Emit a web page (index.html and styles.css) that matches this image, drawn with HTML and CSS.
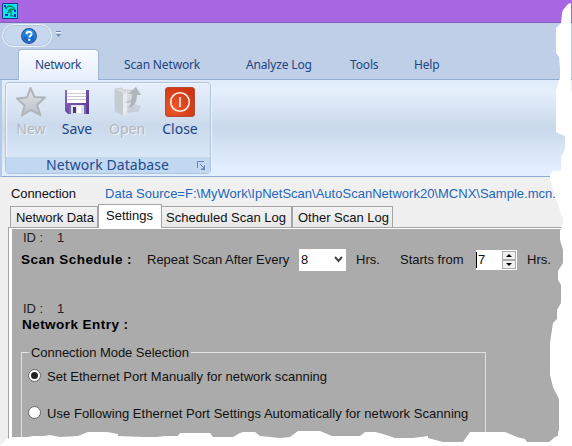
FILE: index.html
```html
<!DOCTYPE html>
<html lang="en">
<head>
<meta charset="utf-8">
<title>Network Scanner</title>
<link rel="stylesheet" href="styles.css">
</head>
<body>
<main class="window">
  <header class="titlebar">
    <svg class="app-icon" width="16" height="16" viewBox="0 0 16 16">
      <path fill="#10e4ee" stroke="#123c88" d="M.5.5h15v15H.5z"/>
      <path fill="none" stroke="#087c54" stroke-width="1.2" d="M4 5l3-2 4 1 2 3-4-1-3 2M9 6v7h4M9 8l-4 2M3 4l2 2"/>
      <path fill="#1630c8" d="M2 2h2v2H2zM3 11h3v2H3zM12 11h2v3h-2zM12 7h2v2h-2z"/>
    </svg>
  </header>
  <section class="ribbon-head">
    <div class="quick">
      <div class="pill">
        <svg width="16" height="16" viewBox="0 0 16 16">
          <defs><radialGradient id="help" cx=".5" cy=".25" r=".8"><stop offset="0" stop-color="#2f9cf0"/><stop offset="1" stop-color="#0647b4"/></radialGradient></defs>
          <circle cx="8" cy="8" r="7.3" fill="url(#help)" stroke="#1d4c96" stroke-width="1.2"/>
          <circle cx="8" cy="8" r="6.3" fill="none" stroke="#64b5f4" stroke-width=".5"/>
          <path d="M5.600 6.200c0-3.200 5-3.100 5-.2 0 1.700-2.300 1.700-2.300 3.500" fill="none" stroke="#fff" stroke-width="1.900"/>
          <path fill="#fff" d="M7.200 10.800h2.100v2H7.200z"/>
        </svg>
      </div>
      <svg class="more" width="7" height="7" viewBox="0 0 7 7"><path fill="#7188ac" d="M1 0h5v1H1zM1 3h5L3.500 6z"/><path fill="#f4f8ff" d="M1 1h5v1H1z"/></svg>
    </div>
    <nav class="tabs">
      <span class="tab active">Network</span>
      <span class="tab t-scan">Scan Network</span>
      <span class="tab t-log">Analyze Log</span>
      <span class="tab t-tools">Tools</span>
      <span class="tab t-help">Help</span>
    </nav>
  </section>
  <section class="ribbon">
    <div class="group">
      <div class="actions">
        <div class="action off">
          <svg width="32" height="32" viewBox="0 0 32 32"><defs><linearGradient id="star" x2="0" y2="1"><stop stop-color="#e4e6e9"/><stop offset="1" stop-color="#b9bec5"/></linearGradient></defs><path fill="url(#star)" stroke="#b0b5bc" stroke-width="2" stroke-linejoin="round" d="M15.500 3l4 9 10.500.500-8 7.500 3.500 10-9.500-5-9 5.500 2.500-10L2 13.500l10-1z"/></svg>
          <span>New</span>
        </div>
        <div class="action save">
          <svg width="32" height="32" viewBox="0 0 32 32"><defs><linearGradient id="disk" x2="1" y2="1"><stop stop-color="#8a6dc4"/><stop offset="1" stop-color="#563190"/></linearGradient></defs><path fill="url(#disk)" d="M4 5h24v24H7l-3-3z"/><path fill="#fff" d="M6 5h19v13H6z"/><path stroke="#cbc8d4" d="M6 8.500h19M6 11.500h19M6 14.500h19"/><path fill="#786db0" d="M8 20h17v9H8z"/><path fill="#dedee8" d="M10 20h13v9H10z"/><path fill="#49366f" d="M12 22h3v6h-3z"/><path fill="#fff" d="M16 21h4v7h-4z"/></svg>
          <span>Save</span>
        </div>
        <div class="action off open">
          <svg width="32" height="32" viewBox="0 0 32 32"><path fill="#d8dce1" stroke="#c9ced5" d="M4 4l7-1 1 2h9v22H4z"/><path fill="#c6cbd2" d="M4 4l8 4v23l-8-5z"/><path fill="#e8ebef" d="M12 10l4-3v20l-4 4z"/><path fill="#bcc2ca" d="M16 27h11l3-6-9-3z" opacity=".55"/><path fill="#b0b5bc" d="M13 17c7 0 9-4 8-8h-4l8-7 5 8h-4c0 8-4 13-10 13 3-2 4-4 4-7-2 2-4 2-7 1z"/></svg>
          <span>Open</span>
        </div>
        <div class="action close">
          <svg width="32" height="32" viewBox="0 0 32 32"><defs><radialGradient id="power" cx=".3" cy=".7" r=".8"><stop stop-color="#f0582d"/><stop offset="1" stop-color="#cc3414"/></radialGradient></defs><rect x="1.500" y="2.500" width="29" height="29" rx="2.500" fill="url(#power)" stroke="#b94a38"/><circle cx="16" cy="17" r="9.300" fill="none" stroke="#fff5ea" stroke-width="1.600"/><path stroke="#fff5ea" stroke-width="1.600" d="M16 12v10"/></svg>
          <span>Close</span>
        </div>
      </div>
      <div class="group-name"><span>Network Database</span>
        <svg width="9" height="9" viewBox="0 0 9 9"><path fill="none" stroke="#6287b8" d="M.5 7V.5H7M3 3l4 4"/><path fill="#6287b8" d="M8 4v5H4v-1l2-1 1-2z"/></svg>
      </div>
    </div>
  </section>
  <div class="connection"><span class="conn-label">Connection</span><span class="source">Data Source=F:\MyWork\IpNetScan\AutoScanNetwork20\MCNX\Sample.mcn.</span></div>
  <nav class="page-tabs">
    <span class="ptab p1">Network Data</span><span class="ptab selected">Settings</span><span class="ptab p3">Scheduled Scan Log</span><span class="ptab p4">Other Scan Log</span>
  </nav>
  <section class="page">
    <div class="content">
      <div class="id"><span>ID :</span><span>1</span></div>
      <div class="schedule">
        <strong class="sched-title">Scan Schedule :</strong>
        <span class="repeat">Repeat Scan After Every</span>
        <div class="combo"><span>8</span><svg width="9" height="7" viewBox="0 0 9 7"><path fill="none" stroke="#484848" stroke-width="2" d="M1 1l3.500 4L8 1"/></svg></div>
        <span>Hrs.</span>
        <span class="starts">Starts from</span>
        <div class="spinner"><span>7</span><div class="buttons"><i class="up"></i><i class="down"></i></div></div>
        <span>Hrs.</span>
      </div>
      <div class="id second"><span>ID :</span><span>1</span></div>
      <strong class="entry">Network Entry :</strong>
      <fieldset class="modes">
        <legend>Connection Mode Selection</legend>
        <div class="mode"><i class="radio on"></i><span class="m1">Set Ethernet Port Manually for network scanning</span></div>
        <div class="mode"><i class="radio"></i><span class="m2">Use Following Ethernet Port Settings Automatically for network Scanning</span></div>
      </fieldset>
    </div>
  </section>
  <svg class="torn" width="572" height="446" viewBox="0 0 572 446">
    <path fill="#fff" d="M571 3L568 4 563 10 562 13 561 23 556 28V53L559 57 560 68V78L558 83 556 91V132L560 134 565 136V149L561 157V171H553L550 174V180L552 185 554 193 556 200 559 207 561 215 563 218V224L560 231V240L563 250V263L558 271V280L561 285V303L557 310V319L553 323 551 336 550 343V375L553 387 559 399V430L558 432V436L555 437 549 442H527L525 439 517 437 505 432H470L463 442H443L428 438V436L413 438H395L383 434 375 432H365L360 436H332L320 431H298L290 437 280 438 260 436 255 432H243L240 433 233 437H213L210 433H180L178 436H165L157 437H143L118 436V434L107 432H88L78 436 60 437 50 435 44 436 33 436 28 437H13L7 439 0 446H572V91H571z"/>
  </svg>
</main>
</body>
</html>
```
FILE: styles.css
```css
* { box-sizing: border-box; }
body { margin: 0; font-family: "Liberation Sans", Arial, sans-serif; font-size: 13px; color: #111; }
svg { display: block; flex: none; }
.window { position: relative; width: 572px; height: 446px; overflow: hidden; background: #f0f0f0; white-space: nowrap; }
.titlebar { height: 23px; padding: 3px 2px; background: #a866e2; border-bottom: 1px solid #8060b8; }
.ribbon-head { height: 57px; background: #becfe7; border-bottom: 1px solid #93accf; }
.quick { display: flex; height: 26px; padding: 1px 2px; }
.pill { display: flex; align-items: center; justify-content: center; width: 50px; height: 23px; padding-left: 3px; border: 1px solid #edf3fb; border-radius: 12px; background: #c7d7ed; box-shadow: inset 0 0 0 1px #b5c7e0; }
.more { margin: 7px 0 0 3px; }
.tabs { display: flex; height: 31px; padding-left: 18px; font: 12px/32px "Noto Sans", sans-serif; letter-spacing: -.15px; color: #214583; }
.tab.active { width: 81px; height: 31px; padding-left: 16px; border: 1px solid #9fb5d5; border-bottom: 0; border-radius: 4px 4px 0 0; background: linear-gradient(#f8faff, #e7effb); box-shadow: inset 1px 1px #fff; line-height: 30px; letter-spacing: -.3px; }
.t-scan { width: 122px; padding-left: 25px; }
.t-log { width: 104px; padding-left: 25px; }
.t-tools { width: 64px; padding-left: 25px; }
.t-help { padding-left: 25px; }
.ribbon { height: 97px; padding: 2px 4px; border-left: 2px solid #b5cae5; border-bottom: 1px solid #8daed3; background: linear-gradient(#dfebfa 0, #e5effc 12%, #d9e5f4 28%, #c9d9eb 50%, #d7e5f5 72%, #e2effe 94%); }
.group { width: 206px; height: 92px; margin-left: -1px; border: 1px solid #afc3dd; border-radius: 4px; background: linear-gradient(#e6effa 0, #dae6f4 25%, #cad9eb 48%, #d3e2f3 70%, #e0edfb); box-shadow: inset 1px 1px #f3f7fd, 1px 0 #edf4fd; overflow: hidden; }
.actions { display: flex; height: 74px; padding: 2px 0 0 9px; color: #1b448b; font: 14px/17px "Noto Sans", sans-serif; }
.action { display: flex; flex-direction: column; align-items: center; width: 32px; }
.action span { margin-top: 3px; }
.save { margin-left: 14px; }
.open { margin-left: 18px; }
.close { margin-left: 21px; }
.off { color: #b2b8c0; text-shadow: 1px 1px #edf2f8; }
.group-name { display: flex; height: 16px; align-items: center; padding-left: 40px; background: #c2d8f1; color: #214b8e; font: 14px/16px "Noto Sans", sans-serif; letter-spacing: .06px; }
.group-name span { width: 151px; }
.connection { display: flex; height: 27px; padding: 9px 11px 0; line-height: 16px; }
.conn-label { width: 94px; letter-spacing: -.1px; }
.source { color: #2266bd; letter-spacing: .01px; }
.page-tabs { display: flex; align-items: flex-end; height: 23px; padding-left: 10px; }
.ptab { height: 21px; padding-left: 5px; border: 1px solid #a5a5a5; border-bottom: 0; background: linear-gradient(#f2f2f2, #e8e8e8); line-height: 21px; }
.p1 { width: 88px; letter-spacing: -.08px; }
.ptab.selected { position: relative; width: 64px; height: 24px; margin-bottom: -1px; padding-left: 7px; background: #fff; line-height: 21px; }
.p3 { width: 130px; padding-left: 4px; border-left: 0; }
.p4 { width: 101px; }
.page { height: 219px; margin-left: 8px; padding: 1px 0 0 3px; border-left: 1px solid #a5a5a5; border-top: 1px solid #a5a5a5; background: #fff; }
.content { height: 217px; padding-left: 9px; background: #ababab; }
.id { display: flex; height: 15px; padding-left: 2px; line-height: 17px; color: #222; }
.id span:first-child { width: 34px; }
.schedule { display: grid; grid-template-columns: 126px 152px 57px 44px 76px 51px 1fr; align-items: center; height: 31px; }
.sched-title, .entry { color: #000; font-size: 13.500px; letter-spacing: .45px; }
.combo { display: flex; align-items: center; justify-content: space-between; width: 47px; height: 22px; padding: 0 3px 0 2px; background: #fff; }
.spinner { display: flex; width: 41px; height: 20px; background: #fff; }
.spinner span { width: 26px; margin: 2px 0; padding-left: 1px; border-left: 1px solid #000; line-height: 16px; }
.buttons { width: 15px; padding: 1px 0; }
.buttons i { display: flex; align-items: center; justify-content: center; width: 14px; height: 9px; border: 1px solid #aaa; background: #f0f0f0; }
.buttons i::after { content: ""; border: 3px solid transparent; }
.up::after { border-top-width: 0 !important; border-bottom-color: #000 !important; }
.down::after { border-bottom-width: 0 !important; border-top-color: #000 !important; }
.second { height: 16px; margin-top: 25px; }
.entry { display: block; height: 20px; margin-left: 1px; line-height: 17px; }
.modes { width: 465px; height: 115px; margin: 8px 0 0; padding: 6px 6px 0; border: 1px solid #e2e2e2; }
.modes legend { height: 16px; margin-left: 1px; padding: 0 2px; line-height: 18px; letter-spacing: -.04px; }
.mode { display: flex; align-items: center; height: 37px; padding-bottom: 18px; }
.m1 { letter-spacing: .025px; }
.m2 { letter-spacing: .042px; }
.m1, .m2 { padding-top: 1px; }
.radio { display: flex; align-items: center; justify-content: center; width: 13px; height: 13px; margin-right: 6px; border: 1px solid #666; border-radius: 50%; background: #fff; }
.radio.on::after { content: ""; width: 7px; height: 7px; border-radius: 50%; background: #222; }
.torn { position: absolute; inset: 0; }
```
